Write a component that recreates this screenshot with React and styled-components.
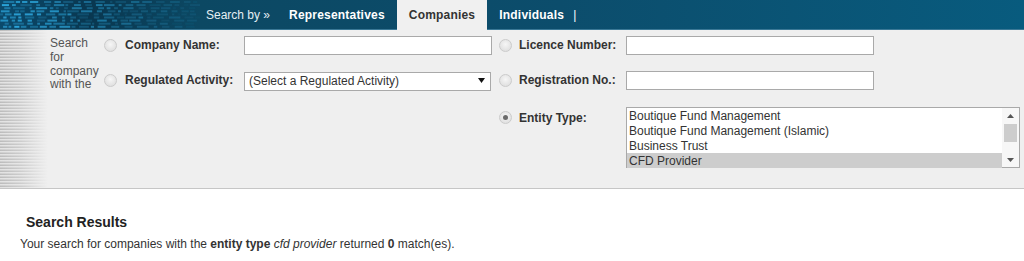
import React from 'react'
import styled, { createGlobalStyle } from 'styled-components'

const GlobalStyle = createGlobalStyle`
  html, body {
    margin: 0;
    padding: 0;
    background: #fff;
  }
  body {
    font-family: 'Liberation Sans', Arial, sans-serif;
    color: #333;
  }
`

const entityTypes = [
  'Boutique Fund Management',
  'Boutique Fund Management (Islamic)',
  'Business Trust',
  'CFD Provider',
]

// little cyan "screen" blocks for the banner on the left of the header
const bannerBits = (() => {
  let s = 11
  const rnd = () => {
    s = (s * 9301 + 49297) % 233280
    return s / 233280
  }
  const out = []
  for (let row = 0; row < 9; row++) {
    let x = rnd() * 5
    while (x < 196) {
      const w = 2 + rnd() * 10
      const fade = Math.max(0, 1 - x / 215)
      out.push({ x, y: 1 + row * 3.1, w, o: (0.25 + rnd() * 0.7) * fade })
      x += w + 1 + rnd() * 5
    }
  }
  return out
})()

const Header = styled.header`
  display: flex;
  align-items: stretch;
  height: 29px;
  border-bottom: 1px solid #3a7896;
  background: linear-gradient(to right, #0a3953 0, #0c4863 200px, #0c4d6c 560px, #085b7e 100%);
`

const Banner = styled.svg`
  display: block;
  width: 200px;
  height: 29px;
  flex: none;
`

const SearchBy = styled.span`
  display: flex;
  align-items: center;
  padding: 0 7px 0 6px;
  font-size: 12px;
  color: #e4eef3;
`

const NavItem = styled.a`
  display: flex;
  align-items: center;
  padding: 0 12px;
  margin-bottom: ${p => (p.$active ? '-1px' : '0')};
  font-size: 12px;
  font-weight: bold;
  letter-spacing: 0.2px;
  text-decoration: none;
  color: ${p => (p.$active ? '#333' : '#fff')};
  background: ${p => (p.$active ? '#f0f0f0' : 'transparent')};
`

const Separator = styled.span`
  margin-left: 9px;
  font-weight: normal;
`

const Panel = styled.section`
  display: flex;
  height: 158px;
  background: #efefef;
  border-bottom: 1px solid #c6c6c6;
`

const Stripes = styled.div`
  width: 48px;
  flex: none;
  background:
    linear-gradient(to right, rgba(239, 239, 239, 0) 0%, rgba(239, 239, 239, 0.35) 45%, #efefef 100%),
    repeating-linear-gradient(to bottom, #bcbcbc 0 1px, #e2e2e2 1px 2px, #cfcfcf 2px 3px);
`

const FormGrid = styled.div`
  flex: 1;
  display: grid;
  grid-template-columns: 54px 21px 119px 247px 8px 20px 107px 1fr;
  grid-template-rows: 19px 19px 62px;
  row-gap: 16px;
  align-content: start;
  padding: 6px 4px 0 2px;
`

const Intro = styled.div`
  grid-column: 1;
  grid-row: 1 / span 2;
  align-self: start;
  padding-top: 1px;
  font-size: 12px;
  line-height: 13.8px;
  color: #555;
`

const Radio = styled.input.attrs({ type: 'radio' })`
  grid-column: ${p => p.$col};
  align-self: ${p => (p.$top ? 'start' : 'center')};
  margin: ${p => (p.$top ? '5px 0 0' : '0')};
  appearance: none;
  width: 13px;
  height: 13px;
  border-radius: 50%;
  border: 1px solid #cbcbcb;
  background: radial-gradient(circle at 50% 40%, #f6f6f6 0, #e2e2e2 70%);
  box-sizing: border-box;
  position: relative;

  &:checked::after {
    content: '';
    position: absolute;
    left: 3px;
    top: 3px;
    width: 5px;
    height: 5px;
    border-radius: 50%;
    background: #6a6a6a;
  }
`

const Label = styled.label`
  grid-column: ${p => p.$col};
  align-self: ${p => (p.$top ? 'start' : 'center')};
  margin-top: ${p => (p.$top ? '5px' : '0')};
  font-size: 12px;
  line-height: 15px;
  font-weight: bold;
  color: #333;
  white-space: nowrap;
`

const TextInput = styled.input.attrs({ type: 'text' })`
  grid-column: ${p => p.$col};
  width: 248px;
  height: 19px;
  box-sizing: border-box;
  margin: 0;
  border: 1px solid #a9a9a9;
  background: #fff;
  font: 12px 'Liberation Sans', Arial, sans-serif;
`

const SelectWrap = styled.div`
  grid-column: 4;
  position: relative;
  width: 247px;
  height: 19px;
`

const Select = styled.select`
  appearance: none;
  width: 100%;
  height: 100%;
  box-sizing: border-box;
  margin: 0;
  padding: 0 0 0 4px;
  border: 1px solid #a9a9a9;
  border-radius: 0;
  background: #fff;
  color: #333;
  font: 12px 'Liberation Sans', Arial, sans-serif;
`

const SelectArrow = styled.svg`
  position: absolute;
  right: 6px;
  top: 7px;
  width: 7px;
  height: 5px;
  pointer-events: none;
`

const ListBox = styled.div`
  grid-column: 8;
  margin-top: 1px;
  display: flex;
  height: 61px;
  box-sizing: border-box;
  border: 1px solid #a9a9a9;
  background: #fff;
`

const Options = styled.ul`
  flex: 1;
  margin: 0;
  padding: 0;
  list-style: none;
`

const Option = styled.li`
  height: 15px;
  line-height: 16px;
  padding-left: 2px;
  font-size: 12px;
  color: #333;
  background: ${p => (p.$selected ? '#cdcdcd' : 'transparent')};
`

const Scrollbar = styled.div`
  width: 17px;
  flex: none;
  display: flex;
  flex-direction: column;
  background: #f7f7f7;
`

const ScrollButton = styled.div`
  height: 15px;
  display: flex;
  align-items: center;
  justify-content: center;
`

const Track = styled.div`
  flex: 1;
  padding: 1px 2px 0;
`

const Thumb = styled.div`
  height: 18px;
  background: #cdcdcd;
`

const Results = styled.section`
  padding: 25px 0 0 20px;
`

const ResultsTitle = styled.h2`
  margin: 0 0 6px 6px;
  font-size: 14px;
  line-height: 17px;
  font-weight: bold;
  color: #222;
`

const ResultsText = styled.p`
  margin: 0;
  font-size: 12px;
  line-height: 14px;
  color: #333;
`

const Triangle = ({ up }) => (
  <svg width="7" height="4" viewBox="0 0 7 4">
    <path d={up ? 'M0 4 L3.5 0 L7 4 Z' : 'M0 0 L3.5 4 L7 0 Z'} fill="#555" />
  </svg>
)

const App = () => {
  return (
    <>
      <GlobalStyle />
      <Header>
        <Banner viewBox="0 0 200 29">
          <defs>
            <linearGradient id="bannerBg" x1="0" x2="1" y1="0" y2="0">
              <stop offset="0" stopColor="#0b4a6c" />
              <stop offset="0.45" stopColor="#093750" />
              <stop offset="1" stopColor="#0c4863" />
            </linearGradient>
            <filter id="soft">
              <feGaussianBlur stdDeviation="0.5" />
            </filter>
          </defs>
          <rect width="200" height="29" fill="url(#bannerBg)" />
          <g filter="url(#soft)">
            {bannerBits.map((b, i) => (
              <rect key={i} x={b.x} y={b.y} width={b.w} height="2" fill="#2fb0e8" opacity={b.o} />
            ))}
          </g>
        </Banner>
        <SearchBy>Search by »</SearchBy>
        <NavItem href="#">Representatives</NavItem>
        <NavItem href="#" $active>Companies</NavItem>
        <NavItem href="#">
          Individuals<Separator>|</Separator>
        </NavItem>
      </Header>

      <Panel>
        <Stripes />
        <FormGrid>
          <Intro>
            Search
            <br />
            for
            <br />
            company
            <br />
            with the
          </Intro>

          <Radio name="by" $col={2} />
          <Label $col={3}>Company Name:</Label>
          <TextInput $col={4} />
          <Radio name="by" $col={6} />
          <Label $col={7}>Licence Number:</Label>
          <TextInput $col={8} />

          <Radio name="by" $col={2} />
          <Label $col={3}>Regulated Activity:</Label>
          <SelectWrap>
            <Select defaultValue="">
              <option value="">(Select a Regulated Activity)</option>
            </Select>
            <SelectArrow viewBox="0 0 7 5">
              <path d="M0 0 L3.5 5 L7 0 Z" fill="#111" />
            </SelectArrow>
          </SelectWrap>
          <Radio name="by" $col={6} />
          <Label $col={7}>Registration No.:</Label>
          <TextInput $col={8} />

          <Radio name="by" $col={6} $top defaultChecked />
          <Label $col={7} $top>Entity Type:</Label>
          <ListBox>
            <Options>
              {entityTypes.map(t => (
                <Option key={t} $selected={t === 'CFD Provider'}>
                  {t}
                </Option>
              ))}
            </Options>
            <Scrollbar>
              <ScrollButton>
                <Triangle up />
              </ScrollButton>
              <Track>
                <Thumb />
              </Track>
              <ScrollButton>
                <Triangle />
              </ScrollButton>
            </Scrollbar>
          </ListBox>
        </FormGrid>
      </Panel>

      <Results>
        <ResultsTitle>Search Results</ResultsTitle>
        <ResultsText>
          Your search for companies with the <b>entity type</b> <i>cfd provider</i> returned <b>0</b> match(es).
        </ResultsText>
      </Results>
    </>
  )
}

export default App
